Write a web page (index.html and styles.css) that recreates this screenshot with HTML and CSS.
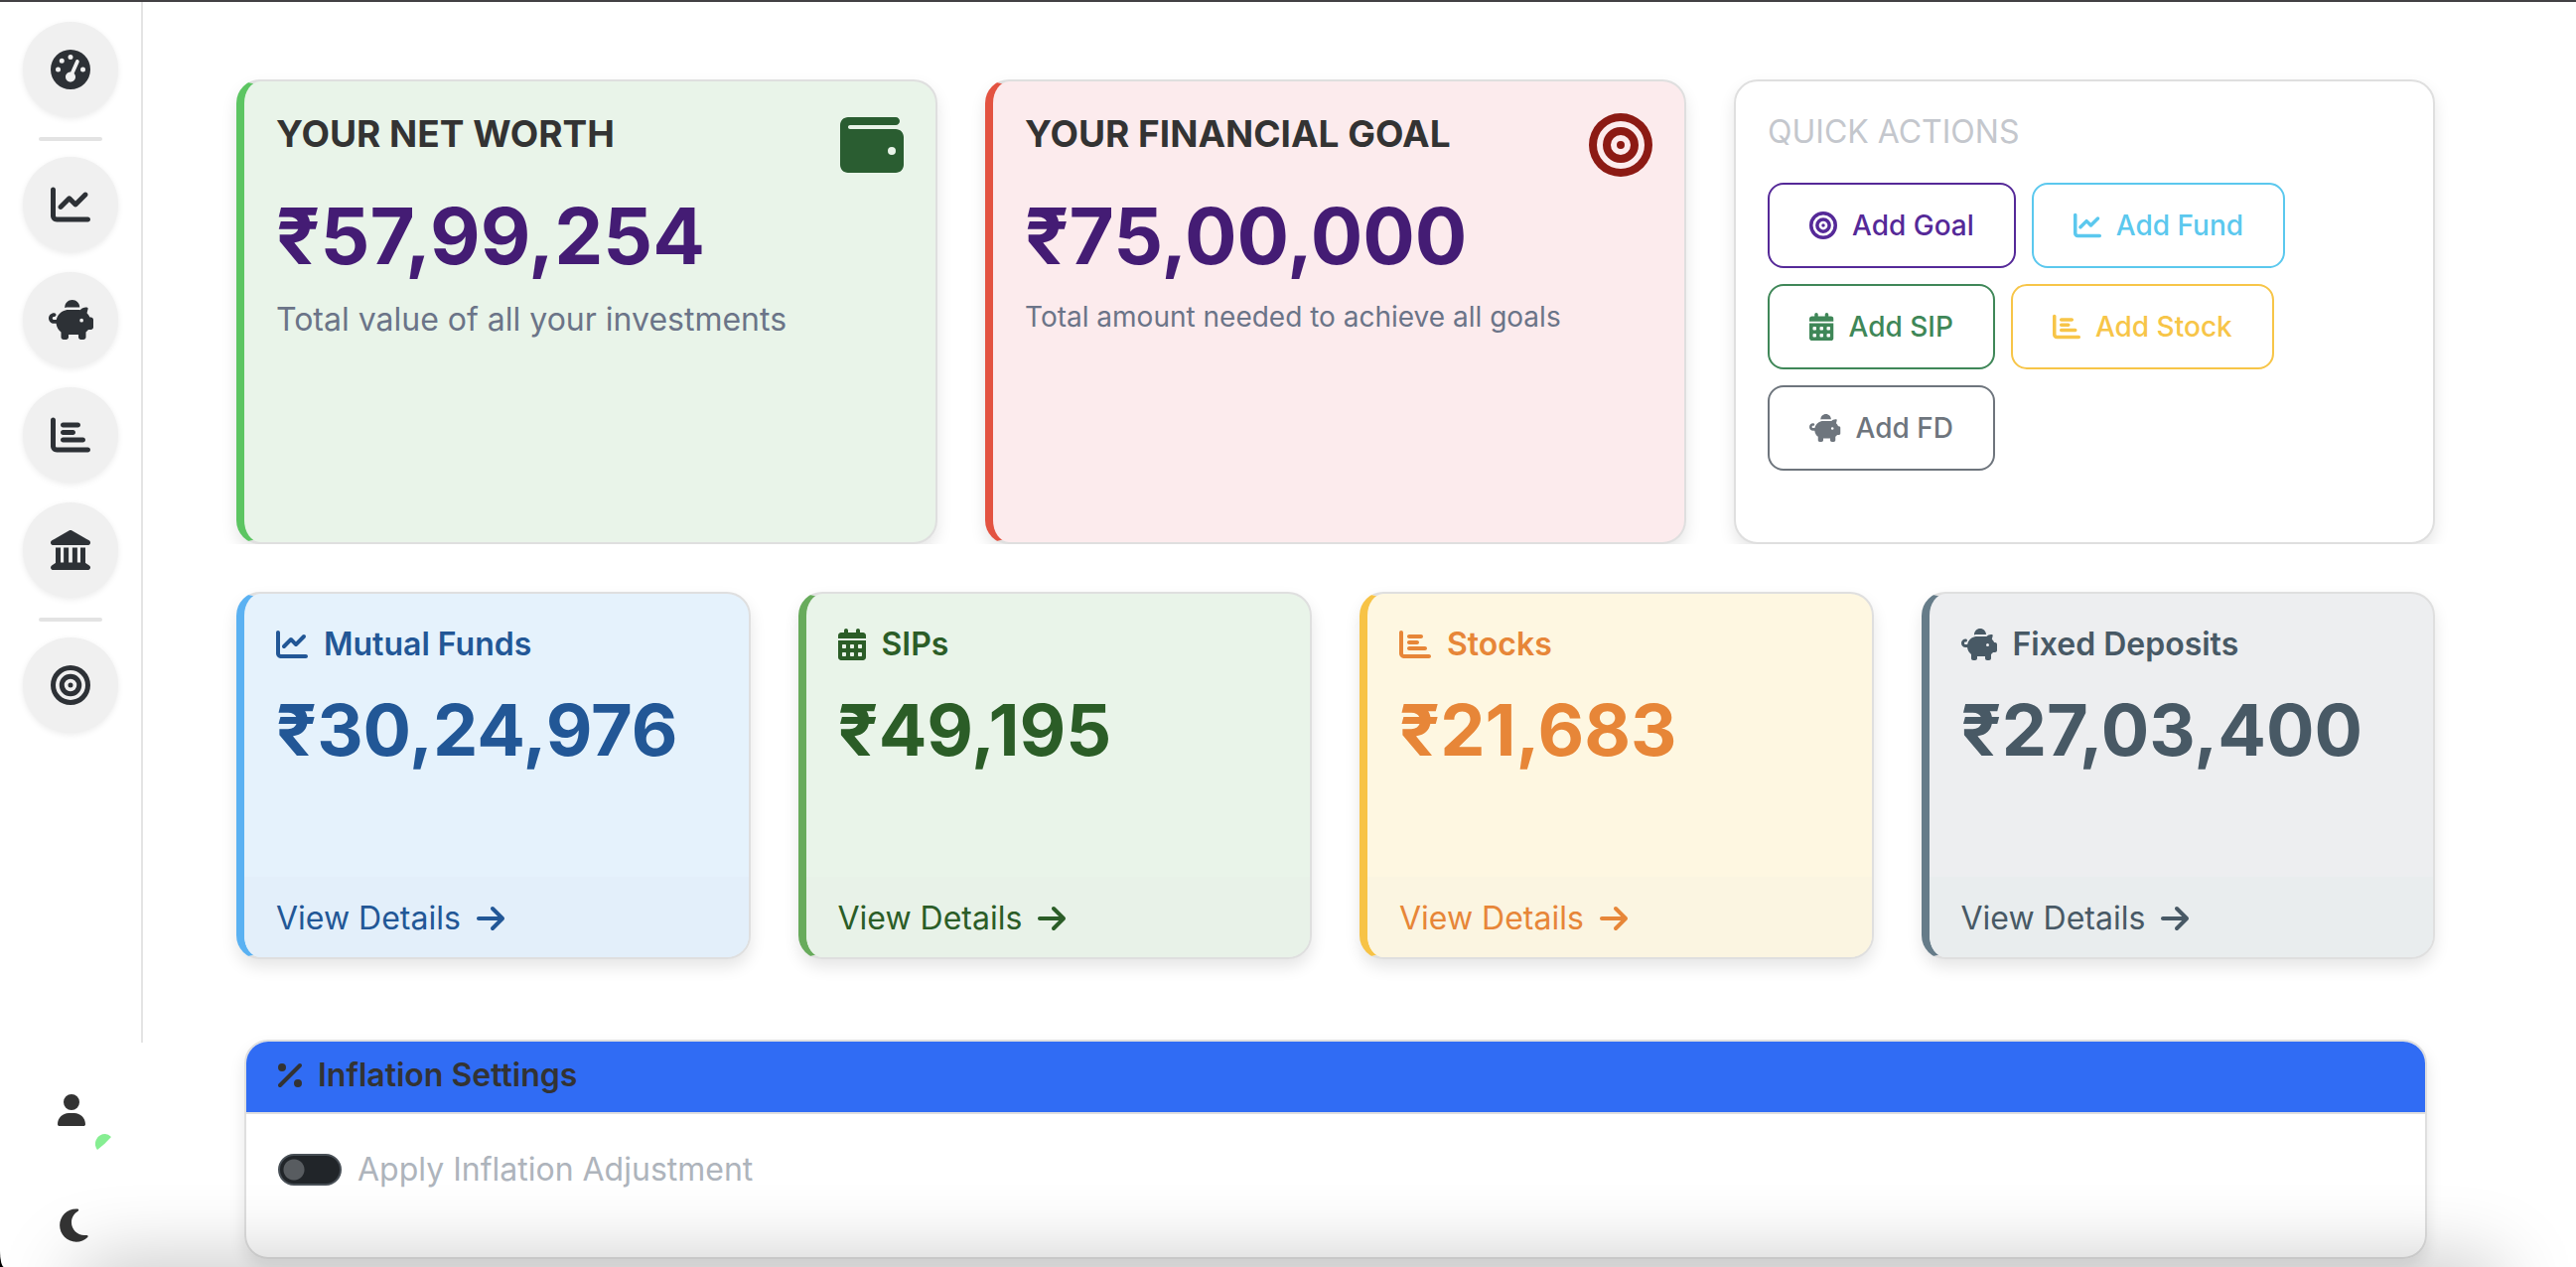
FILE: index.html
```html
<!DOCTYPE html>
<html lang="en">
<head>
<meta charset="utf-8">
<meta name="viewport" content="width=device-width, initial-scale=1">
<title>Portfolio Dashboard</title>
<link rel="stylesheet" href="styles.css">
</head>
<body>
<svg class="sprite" aria-hidden="true">
  <symbol id="gauge" viewBox="0 0 512 512"><path d="M0 256a256 256 0 1 1 512 0A256 256 0 1 1 0 256zM288 96a32 32 0 1 0 -64 0 32 32 0 1 0 64 0zM256 416c35.3 0 64-28.7 64-64c0-17.4-6.9-33.1-18.1-44.6L366 161.7c5.3-12.1-.2-26.3-12.3-31.6s-26.3 .2-31.6 12.3L257.9 288c-.6 0-1.3 0-1.9 0c-35.3 0-64 28.7-64 64s28.7 64 64 64zM176 144a32 32 0 1 0 -64 0 32 32 0 1 0 64 0zM96 288a32 32 0 1 0 0-64 32 32 0 1 0 0 64zm352-32a32 32 0 1 0 -64 0 32 32 0 1 0 64 0z"/></symbol>
  <symbol id="chart-line" viewBox="0 0 512 512"><path d="M64 64c0-17.7-14.3-32-32-32S0 46.3 0 64V400c0 44.2 35.8 80 80 80H480c17.7 0 32-14.3 32-32s-14.3-32-32-32H80c-8.8 0-16-7.2-16-16V64zm406.6 86.6c12.5-12.5 12.5-32.8 0-45.3s-32.8-12.5-45.3 0L320 210.7l-57.4-57.4c-12.5-12.5-32.8-12.5-45.3 0l-112 112c-12.5 12.5-12.5 32.8 0 45.3s32.8 12.5 45.3 0L240 221.3l57.4 57.4c12.5 12.5 32.8 12.5 45.3 0l128-128z"/></symbol>
  <symbol id="piggy" viewBox="0 0 576 512"><path d="M400 96l0 .7c-5.3-.4-10.6-.7-16-.7H256c-16.5 0-32.5 2.1-47.8 6c-.1-2-.2-4-.2-6c0-53 43-96 96-96s96 43 96 96zm-16 32c3.5 0 7 .1 10.4 .3c4.2 .3 8.4 .7 12.6 1.3C424.6 109.1 450.8 96 480 96h11.5c10.4 0 18 9.8 15.5 19.9l-13.8 55.2c15.8 14.8 28.7 32.8 37.5 52.9H544c17.7 0 32 14.3 32 32v96c0 17.7-14.3 32-32 32H512c-9.1 12.1-19.9 22.9-32 32v64c0 17.7-14.3 32-32 32H416c-17.7 0-32-14.3-32-32V448H256v32c0 17.7-14.3 32-32 32H192c-17.7 0-32-14.3-32-32V416c-34.9-26.2-58.7-66.3-63.2-112H68c-37.6 0-68-30.4-68-68s30.4-68 68-68h4c13.3 0 24 10.7 24 24s-10.7 24-24 24H68c-11 0-20 9-20 20s9 20 20 20H99.2c12.1-59.8 57.7-107.5 116.3-122.8c12.9-3.4 26.5-5.2 40.5-5.2H384zm64 136a24 24 0 1 0 -48 0 24 24 0 1 0 48 0z"/></symbol>
  <symbol id="chart-bar" viewBox="0 0 512 512"><path d="M32 32c17.7 0 32 14.3 32 32V400c0 8.8 7.2 16 16 16H480c17.7 0 32 14.3 32 32s-14.3 32-32 32H80c-44.2 0-80-35.8-80-80V64C0 46.3 14.3 32 32 32zm96 96c0-17.7 14.3-32 32-32l192 0c17.7 0 32 14.3 32 32s-14.3 32-32 32H160c-17.7 0-32-14.3-32-32zm32 64H288c17.7 0 32 14.3 32 32s-14.3 32-32 32H160c-17.7 0-32-14.3-32-32s14.3-32 32-32zm0 96H416c17.7 0 32 14.3 32 32s-14.3 32-32 32H160c-17.7 0-32-14.3-32-32s14.3-32 32-32z"/></symbol>
  <symbol id="landmark" viewBox="0 0 512 512"><path d="M240.1 4.2c9.8-5.6 21.9-5.6 31.8 0l171.8 98.1L448 104l0 .9 47.9 27.4c12.6 7.2 18.8 22 15.1 36s-16.4 23.8-30.9 23.8H32c-14.5 0-27.2-9.8-30.9-23.8s2.5-28.8 15.1-36L64 104.9V104l4.4-1.6L240.1 4.2zM64 224h64V416h40V224h64V416h48V224h64V416h40V224h64V420.3c.6 .3 1.2 .7 1.8 1.1l48 32c11.7 7.8 17 22.4 12.9 35.9S494.1 512 480 512H32c-14.1 0-26.5-9.2-30.6-22.7s1.1-28.1 12.9-35.9l48-32c.6-.4 1.2-.7 1.8-1.1V224z"/></symbol>
  <symbol id="bullseye" viewBox="0 0 512 512"><path d="M448 256A192 192 0 1 0 64 256a192 192 0 1 0 384 0zM0 256a256 256 0 1 1 512 0A256 256 0 1 1 0 256zm256 80a80 80 0 1 0 0-160 80 80 0 1 0 0 160zm0-224a144 144 0 1 1 0 288 144 144 0 1 1 0-288zM224 256a32 32 0 1 1 64 0 32 32 0 1 1 -64 0z"/></symbol>
  <symbol id="wallet" viewBox="0 0 512 512"><path d="M64 32C28.7 32 0 60.7 0 96V416c0 35.3 28.7 64 64 64H448c35.3 0 64-28.7 64-64V192c0-35.3-28.7-64-64-64H80c-8.8 0-16-7.2-16-16s7.2-16 16-16H448c17.7 0 32-14.3 32-32s-14.3-32-32-32H64zM416 272a32 32 0 1 1 0 64 32 32 0 1 1 0-64z"/></symbol>
  <symbol id="calendar" viewBox="0 0 448 512"><path d="M128 0c17.7 0 32 14.3 32 32V64H288V32c0-17.7 14.3-32 32-32s32 14.3 32 32V64h48c26.5 0 48 21.5 48 48v48H0V112C0 85.5 21.5 64 48 64H96V32c0-17.7 14.3-32 32-32zM0 192H448V464c0 26.5-21.5 48-48 48H48c-26.5 0-48-21.5-48-48V192zm64 80v32c0 8.8 7.2 16 16 16h32c8.8 0 16-7.2 16-16V272c0-8.8-7.2-16-16-16H80c-8.8 0-16 7.2-16 16zm128 0v32c0 8.8 7.2 16 16 16h32c8.8 0 16-7.2 16-16V272c0-8.8-7.2-16-16-16H208c-8.8 0-16 7.2-16 16zm144-16c-8.8 0-16 7.2-16 16v32c0 8.8 7.2 16 16 16h32c8.8 0 16-7.2 16-16V272c0-8.8-7.2-16-16-16H336zM64 400v32c0 8.8 7.2 16 16 16h32c8.8 0 16-7.2 16-16V400c0-8.8-7.2-16-16-16H80c-8.8 0-16 7.2-16 16zm144-16c-8.8 0-16 7.2-16 16v32c0 8.8 7.2 16 16 16h32c8.8 0 16-7.2 16-16V400c0-8.8-7.2-16-16-16H208zm112 16v32c0 8.8 7.2 16 16 16h32c8.8 0 16-7.2 16-16V400c0-8.8-7.2-16-16-16H336c-8.8 0-16 7.2-16 16z"/></symbol>
  <symbol id="arrow" viewBox="0 0 448 512"><path d="M438.6 278.6c12.5-12.5 12.5-32.8 0-45.3l-160-160c-12.5-12.5-32.8-12.5-45.3 0s-12.5 32.8 0 45.3L338.8 224 32 224c-17.7 0-32 14.3-32 32s14.3 32 32 32l306.7 0L233.4 393.4c-12.5 12.5-12.5 32.8 0 45.3s32.8 12.5 45.3 0l160-160z"/></symbol>
  <symbol id="percent" viewBox="0 0 384 512"><path d="M374.6 118.6c12.5-12.5 12.5-32.8 0-45.3s-32.8-12.5-45.3 0l-320 320c-12.5 12.5-12.5 32.8 0 45.3s32.8 12.5 45.3 0l320-320zM128 128A64 64 0 1 0 0 128a64 64 0 1 0 128 0zM384 384a64 64 0 1 0 -128 0 64 64 0 1 0 128 0z"/></symbol>
  <symbol id="user" viewBox="0 0 448 512"><path d="M224 256A128 128 0 1 0 224 0a128 128 0 1 0 0 256zm-45.7 48C79.8 304 0 383.8 0 482.3C0 498.7 13.3 512 29.7 512H418.3c16.4 0 29.7-13.3 29.7-29.7C448 383.8 368.2 304 269.7 304H178.3z"/></symbol>
  <symbol id="moon" viewBox="-64 0 448 512"><path d="M223.5 32C100 32 0 132.3 0 256S100 480 223.5 480c60.6 0 115.5-24.2 155.8-63.4c5-4.9 6.3-12.5 3.1-18.7s-10.1-9.7-17-8.5c-9.8 1.7-19.8 2.6-30.1 2.6c-96.9 0-175.5-78.8-175.5-176c0-65.8 36-123.1 89.3-153.3c6.1-3.5 9.2-10.5 7.7-17.3s-7.3-11.9-14.3-12.5c-6.3-.5-12.6-.8-19-.8z"/></symbol>
</svg>

<div class="app">
  <aside class="sidebar">
    <nav class="nav" aria-label="Main">
      <a class="nav-link" href="#dashboard" aria-label="Dashboard"><svg class="icon"><use href="#gauge"/></svg></a>
      <hr class="nav-rule">
      <a class="nav-link" href="#funds" aria-label="Mutual funds"><svg class="icon"><use href="#chart-line"/></svg></a>
      <a class="nav-link" href="#sips" aria-label="SIPs"><svg class="icon icon-wide"><use href="#piggy"/></svg></a>
      <a class="nav-link" href="#stocks" aria-label="Stocks"><svg class="icon"><use href="#chart-bar"/></svg></a>
      <a class="nav-link" href="#deposits" aria-label="Fixed deposits"><svg class="icon"><use href="#landmark"/></svg></a>
      <hr class="nav-rule">
      <a class="nav-link" href="#goals" aria-label="Goals"><svg class="icon"><use href="#bullseye"/></svg></a>
    </nav>
    <div class="nav-foot">
      <button class="foot-btn" type="button" aria-label="Profile"><svg class="icon icon-user"><use href="#user"/></svg><svg class="status" viewBox="0 0 16 16"><path d="M16 3Q10 10 2 16A10 10 0 0 1 10 0Q13 0 16 3z"/></svg></button>
      <button class="foot-btn" type="button" aria-label="Dark mode"><svg class="icon icon-moon"><use href="#moon"/></svg></button>
    </div>
  </aside>

  <main class="main">
    <section class="row row-top">
      <article class="card card-worth">
        <div class="card-head"><div class="card-text">
          <h2 class="title">YOUR NET WORTH</h2>
          <p class="total">₹57,99,254</p>
        </div><svg class="icon icon-hero"><use href="#wallet"/></svg></div>
        <p class="lead">Total value of all your investments</p>
      </article>
      <article class="card card-goal">
        <div class="card-head"><div class="card-text">
          <h2 class="title">YOUR FINANCIAL GOAL</h2>
          <p class="total">₹75,00,000</p>
        </div><svg class="icon icon-hero"><use href="#bullseye"/></svg></div>
        <p class="note">Total amount needed to achieve all goals</p>
      </article>
      <article class="card card-actions">
        <h2 class="quick">QUICK ACTIONS</h2>
        <div class="actions">
          <button class="btn btn-goal" type="button"><svg class="icon"><use href="#bullseye"/></svg>Add Goal</button>
          <button class="btn btn-fund" type="button"><svg class="icon"><use href="#chart-line"/></svg>Add Fund</button>
          <button class="btn btn-sip" type="button"><svg class="icon icon-narrow"><use href="#calendar"/></svg>Add SIP</button>
          <button class="btn btn-stock" type="button"><svg class="icon"><use href="#chart-bar"/></svg>Add Stock</button>
          <button class="btn btn-fd" type="button"><svg class="icon icon-wide"><use href="#piggy"/></svg>Add FD</button>
        </div>
      </article>
    </section>

    <section class="row row-assets">
      <article class="card asset asset-funds">
        <div class="asset-body">
          <h3 class="asset-name"><svg class="icon"><use href="#chart-line"/></svg>Mutual Funds</h3>
          <p class="amount">₹30,24,976</p>
        </div>
        <a class="asset-link" href="#funds">View Details<svg class="icon icon-narrow"><use href="#arrow"/></svg></a>
      </article>
      <article class="card asset asset-sips">
        <div class="asset-body">
          <h3 class="asset-name"><svg class="icon icon-narrow"><use href="#calendar"/></svg>SIPs</h3>
          <p class="amount">₹49,195</p>
        </div>
        <a class="asset-link" href="#sips">View Details<svg class="icon icon-narrow"><use href="#arrow"/></svg></a>
      </article>
      <article class="card asset asset-stocks">
        <div class="asset-body">
          <h3 class="asset-name"><svg class="icon"><use href="#chart-bar"/></svg>Stocks</h3>
          <p class="amount">₹21,683</p>
        </div>
        <a class="asset-link" href="#stocks">View Details<svg class="icon icon-narrow"><use href="#arrow"/></svg></a>
      </article>
      <article class="card asset asset-deposits">
        <div class="asset-body">
          <h3 class="asset-name"><svg class="icon icon-wide"><use href="#piggy"/></svg>Fixed Deposits</h3>
          <p class="amount">₹27,03,400</p>
        </div>
        <a class="asset-link" href="#deposits">View Details<svg class="icon icon-narrow"><use href="#arrow"/></svg></a>
      </article>
    </section>

    <section class="settings">
      <h3 class="settings-head"><svg class="icon icon-slim"><use href="#percent"/></svg>Inflation Settings</h3>
      <div class="settings-body">
        <input class="switch" type="checkbox" role="switch" id="inflation">
        <label for="inflation">Apply Inflation Adjustment</label>
      </div>
    </section>
  </main>
</div>
<div class="window-shade"></div>
</body>
</html>
```

FILE: styles.css
```css
* { box-sizing: border-box; }

body {
  margin: 0;
  background: #000;
  color: #333;
  font: 400 32px/48px Inter, "Liberation Sans", sans-serif;
  overflow: hidden;
}

h2, h3, p { margin: 0; }
button { font: inherit; cursor: pointer; }
a { text-decoration: none; }

.sprite { display: none; }
.icon { flex: none; width: 1em; height: 1em; fill: currentColor; }
.icon-wide { width: 1.125em; }
.icon-narrow { width: .875em; }
.icon-slim { width: .75em; }

.app {
  display: flex;
  height: 100vh;
  border-top: 2px solid #434144;
  border-bottom-left-radius: 4px 16px;
  background: #fff;
}

/* Sidebar */
.sidebar {
  flex: none;
  width: 144px;
  display: flex;
  flex-direction: column;
}
.nav {
  flex: 1;
  display: flex;
  flex-direction: column;
  align-items: center;
  gap: 20px;
  padding-top: 20px;
  border-right: 2px solid #e4e4e4;
}
.nav-link {
  display: grid;
  place-items: center;
  width: 96px;
  height: 96px;
  border-radius: 50%;
  background: #f0f0f0;
  box-shadow: 0 2px 6px rgba(0, 0, 0, .08);
  color: #2d3136;
  font-size: 40px;
}
.nav-rule {
  width: 64px;
  height: 4px;
  margin: 0 0 -4px;
  border: 0;
  border-radius: 2px;
  background: #e3e3e3;
}
.nav-foot {
  display: flex;
  flex-direction: column;
  align-items: center;
  gap: 20px;
  height: 226px;
  padding-top: 20px;
}
.foot-btn {
  position: relative;
  display: grid;
  place-items: center;
  flex: none;
  width: 96px;
  height: 96px;
  padding: 0;
  border: 0;
  background: none;
  color: #333;
}
.icon-user { width: 28px; height: 32px; }
.icon-moon { width: 34px; height: 38px; }
.status {
  position: absolute;
  right: 8px;
  bottom: 8px;
  width: 16px;
  height: 16px;
  fill: #86ee92;
}

/* Content */
.main {
  flex: 1;
  padding: 78px 142px 8px 94px;
}
.row { display: grid; gap: 48px; }
.row-top {
  grid-template-columns: repeat(3, 1fr);
  margin: 0 -24px;
  padding: 0 24px;
  /* the shadow stops at the lower edge of the row */
  clip-path: inset(-24px 0 0);
}
.row-assets {
  grid-template-columns: repeat(4, 1fr);
  margin-top: 48px;
}
.card {
  min-height: 468px;
  padding: 32px;
  border: 2px solid #dfdfdf;
  border-radius: 24px;
  background: #fff;
  box-shadow: 0 8px 16px rgba(0, 0, 0, .1);
}
.card-worth { background: #e9f4e9; border-left: 8px solid #5cc562; }
.card-goal { background: #fcebed; border-left: 8px solid #e35341; }
.card-head { display: flex; justify-content: space-between; }
.card-worth .icon-hero { color: #2a5d31; }
.card-goal .icon-hero { color: #8c1a14; }
.icon-hero { font-size: 64px; }
.title { font-size: 37px; line-height: 42px; font-weight: 700; }
.total {
  margin-top: 34px;
  color: #441c74;
  font-size: 78px;
  line-height: 96px;
  font-weight: 700;
}
.lead, .note { color: #6b7488; }
.lead { margin-top: 12px; }
.note { margin-top: 12px; font-size: 28px; line-height: 42px; }

.quick {
  color: #c4c7cd;
  font-size: 32px;
  line-height: 38px;
  font-weight: 400;
}
.actions { display: flex; flex-wrap: wrap; gap: 16px; margin-top: 32px; }
.btn {
  display: flex;
  align-items: center;
  gap: 15px;
  height: 86px;
  padding: 0 40px;
  border: 2px solid;
  border-radius: 16px;
  background: #fff;
  font-size: 28px;
  font-weight: 500;
}
.btn-goal { color: #552998; }
.btn-fund { color: #5bc8ee; }
.btn-sip { color: #3f8758; }
.btn-stock { color: #f7c548; }
.btn-fd { color: #6e757d; }

.asset {
  display: flex;
  flex-direction: column;
  min-height: 370px;
  padding: 0;
  border-left-width: 8px;
  overflow: hidden;
}
.asset-body { flex: 1; padding: 32px; }
.asset-name, .asset-link { display: flex; align-items: center; gap: 16px; }
.asset-name { line-height: 38px; font-size: 32px; font-weight: 600; }
.amount {
  margin-top: 24px;
  font-size: 72px;
  line-height: 86px;
  font-weight: 700;
}
.asset-link {
  padding: 18px 32px 15px;
  color: inherit;
}
.asset-funds { color: #225796; background: #e5f2fc; border-left-color: #5ab1f2; }
.asset-sips { color: #2b5d27; background: #e9f4e9; border-left-color: #68ab5c; }
.asset-stocks { color: #e78638; background: #fef7e1; border-left-color: #f7c346; }
.asset-deposits { color: #485965; background: #edeef0; border-left-color: #667c89; }
.asset-funds .asset-link { background: #e3effa; }
.asset-sips .asset-link { background: #e8f2e8; }
.asset-stocks .asset-link { background: #fbf5e1; }
.asset-deposits .asset-link { background: #e9edee; }

.settings {
  margin: 81px 8px 0;
  border: 2px solid #dfdfdf;
  border-radius: 24px;
  box-shadow: 0 8px 16px rgba(0, 0, 0, .1);
  overflow: hidden;
}
.settings-head {
  display: flex;
  align-items: center;
  gap: 16px;
  padding: 14px 32px 18px;
  border-bottom: 2px solid #dfdfdf;
  background: #306cf4;
  font-size: 32px;
  line-height: 39px;
  font-weight: 600;
}
.settings-body {
  display: flex;
  align-items: center;
  gap: 16px;
  padding: 32px 32px 64px;
  color: #aeb4bc;
}
.switch {
  appearance: none;
  width: 64px;
  height: 32px;
  margin: 0;
  border: 2px solid #495057;
  border-radius: 16px;
  background: radial-gradient(circle at 14px 14px, #585c60 10px, #212529 11px);
}

/* Soft shade that rises from below the window and fades at its corners */
.window-shade {
  position: fixed;
  inset: auto 80px -60px;
  height: 60px;
  box-shadow: 0 0 80px rgba(0, 0, 0, .28);
  pointer-events: none;
}
```
